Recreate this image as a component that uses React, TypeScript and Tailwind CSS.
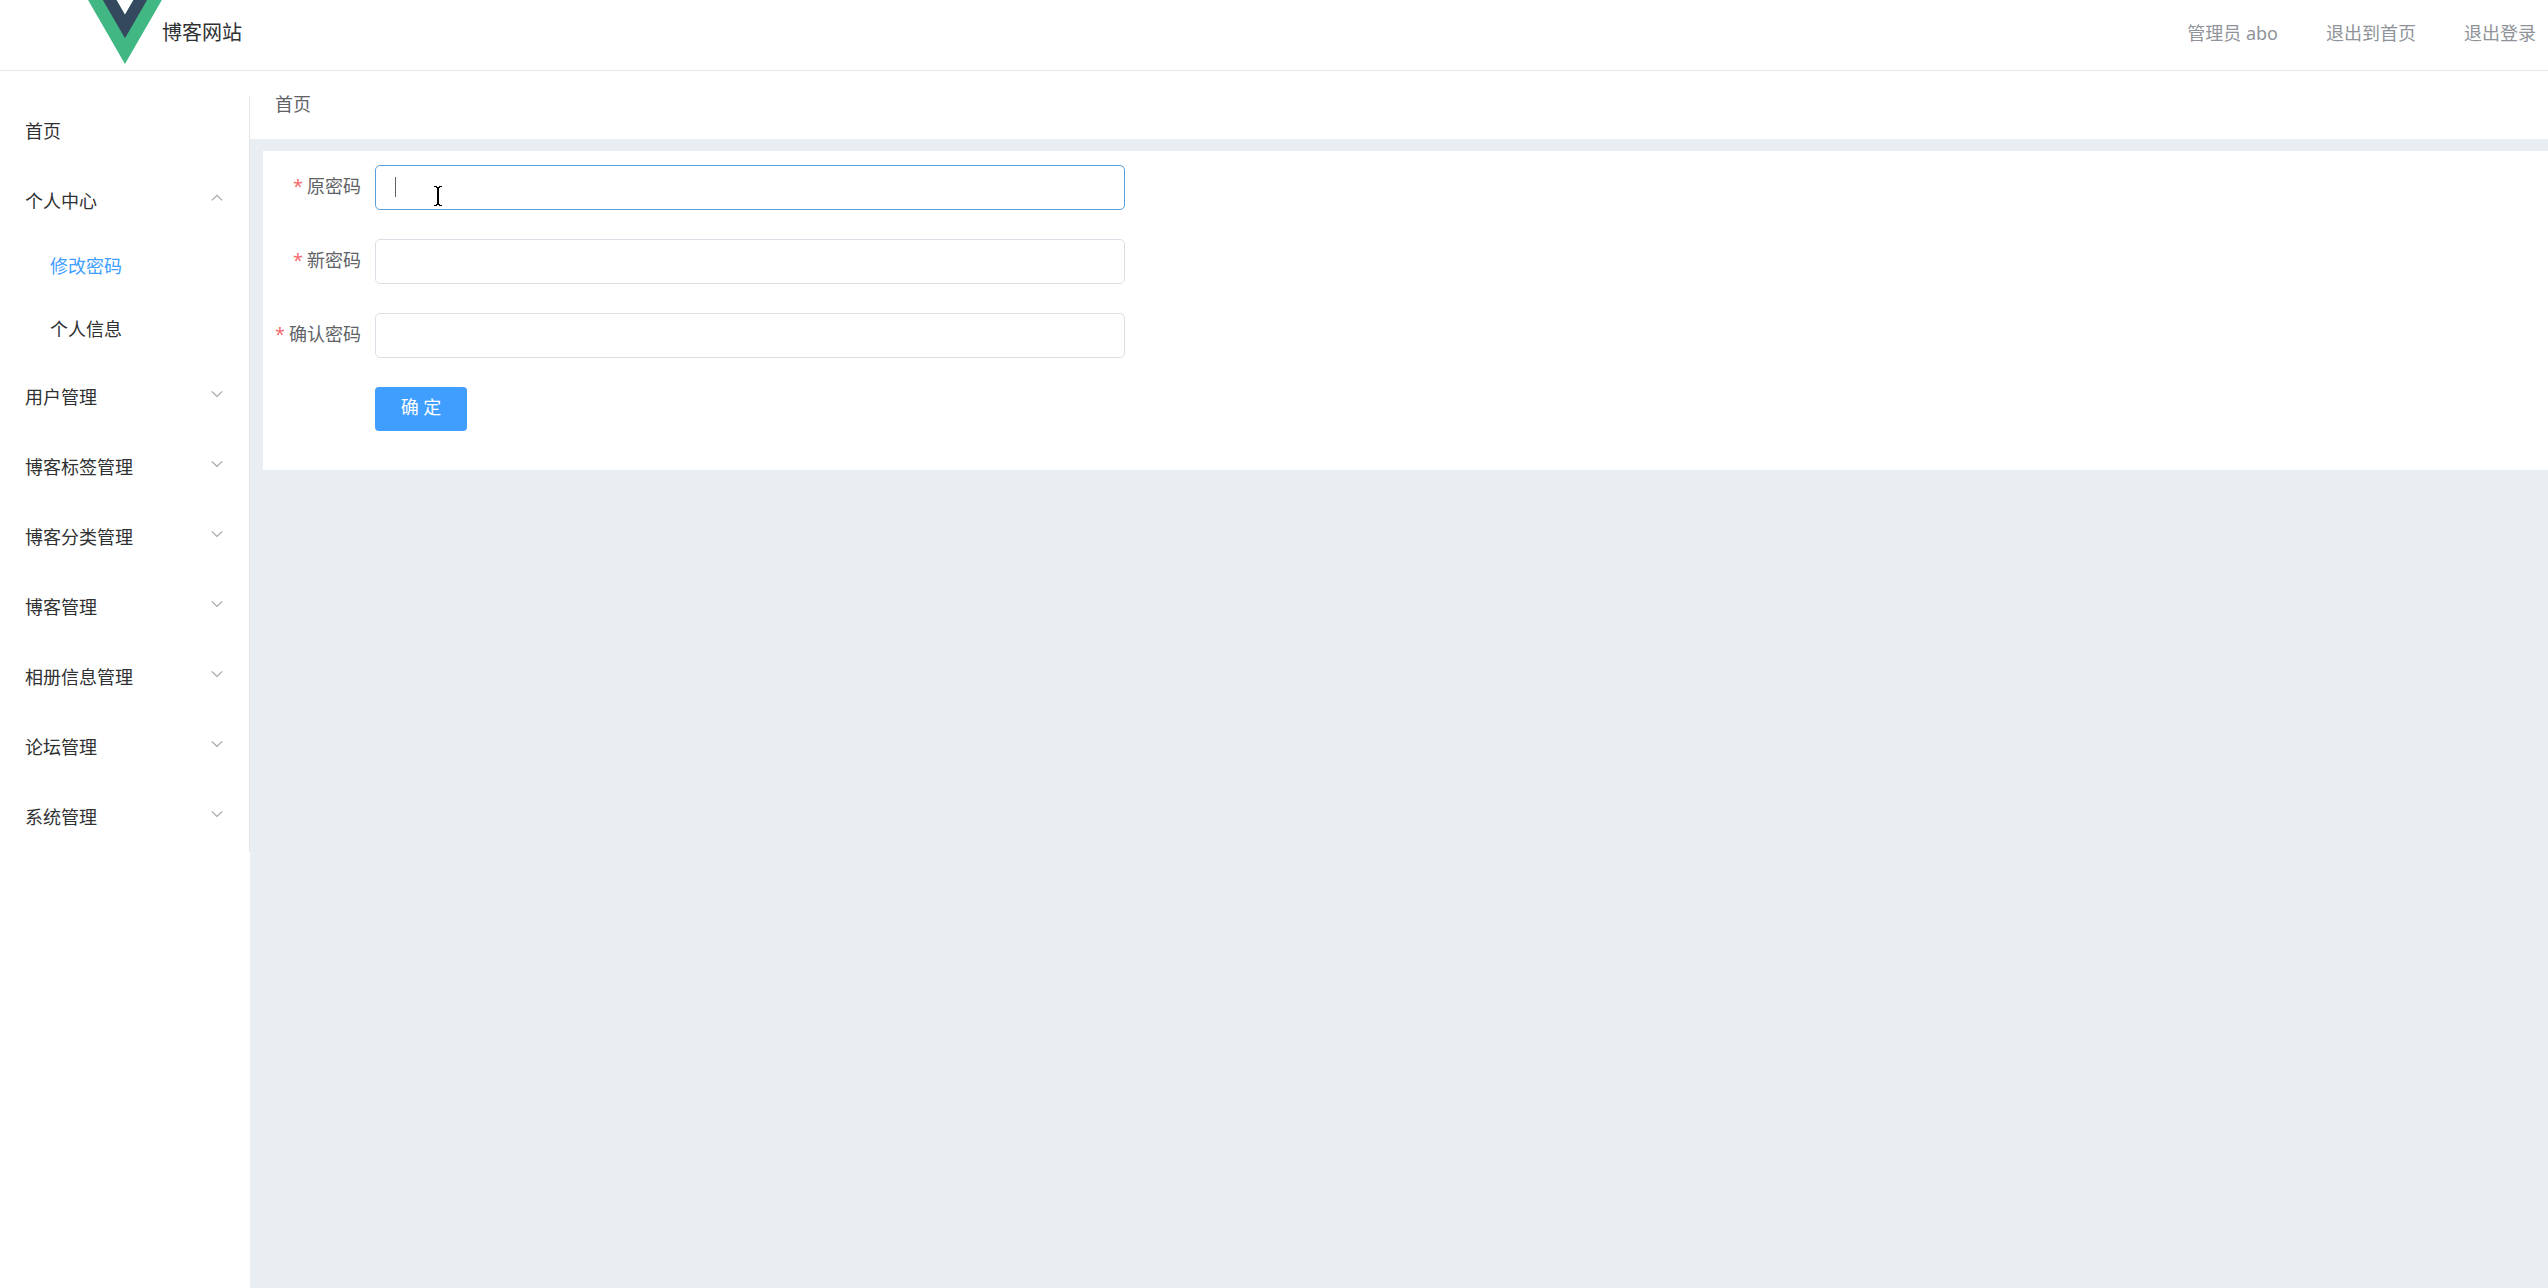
import React, { useState } from "react";

type MenuGroup = { title: string; children?: string[] };

const groups: MenuGroup[] = [
  { title: "个人中心", children: ["修改密码", "个人信息"] },
  { title: "用户管理" },
  { title: "博客标签管理" },
  { title: "博客分类管理" },
  { title: "博客管理" },
  { title: "相册信息管理" },
  { title: "论坛管理" },
  { title: "系统管理" },
];

const fields = [
  { id: "old-password", label: "原密码" },
  { id: "new-password", label: "新密码" },
  { id: "confirm-password", label: "确认密码" },
];

function Logo() {
  return (
    <svg viewBox="0 0 262 227" className="h-16 w-[74px] shrink-0" aria-hidden="true">
      <path d="M161.1 0 130.87 52.35 100.65 0H0l130.87 226.69L261.75 0z" fill="#41b883" />
      <path d="M161.1 0 130.87 52.35 100.65 0H52.35l78.52 136.01L209.4 0z" fill="#34495e" />
    </svg>
  );
}

function Chevron({ open }: { open: boolean }) {
  return (
    <svg
      viewBox="0 0 12 8"
      className="mb-1.5 h-2 w-3 text-[#a3a6ad]"
      fill="none"
      stroke="currentColor"
      strokeWidth="1.2"
      aria-hidden="true"
    >
      <path d={open ? "M.8 6.4 6 1.4l5.2 5" : "M.8 1.4 6 6.4l5.2-5"} />
    </svg>
  );
}

function TextCursor() {
  return (
    <svg
      viewBox="0 0 8 20"
      className="pointer-events-none absolute top-[21px] left-[59px] h-5 w-2"
      aria-hidden="true"
    >
      <path d="M0 0h3v1H0zM5 0h3v1H5zM2 1h4v1H5v16h1v1H2v-1h1V2H2zM0 19h3v1H0zM5 19h3v1H5z" fill="#000" />
    </svg>
  );
}

function Header() {
  return (
    <header className="flex h-[71px] items-start justify-between border-b border-[#e8e8e8] bg-white">
      <a href="#home" className="flex items-start pl-[88px] text-[20px] text-[#303133]">
        <Logo />
        <span className="leading-[66px]">博客网站</span>
      </a>
      <nav className="flex gap-12 pr-3 leading-[66px] text-[#909399]">
        <a href="#profile">管理员 abo</a>
        <a href="#front">退出到首页</a>
        <a href="#logout">退出登录</a>
      </nav>
    </header>
  );
}

function Sidebar() {
  const [open, setOpen] = useState("个人中心");
  return (
    <aside className="w-[250px] shrink-0 bg-white pt-[25px]">
      <ul className="border-r border-[#e6e6e6] text-[#303133]">
        <li>
          <a href="#home" className="flex h-[70px] items-center pl-[25px]">
            首页
          </a>
        </li>
        {groups.map((g) => (
          <li key={g.title}>
            <button
              type="button"
              aria-expanded={open === g.title}
              onClick={() => setOpen(open === g.title ? "" : g.title)}
              className="flex h-[70px] w-full items-center justify-between pr-[26px] pl-[25px]"
            >
              {g.title}
              <Chevron open={open === g.title} />
            </button>
            {g.children && open === g.title && (
              <ul>
                {g.children.map((c, i) => (
                  <li key={c}>
                    <a
                      href={"#" + c}
                      className={"flex h-[63px] items-center pb-0.5 pl-[50px] " + (i === 0 ? "text-[#409eff]" : "")}
                    >
                      {c}
                    </a>
                  </li>
                ))}
              </ul>
            )}
          </li>
        ))}
      </ul>
    </aside>
  );
}

function PasswordForm() {
  return (
    <form className="flex max-w-[862px] flex-col gap-[29px]" onSubmit={(e) => e.preventDefault()}>
      {fields.map((f, i) => (
        <div key={f.id} className="flex">
          <label htmlFor={f.id} className="w-[112px] shrink-0 pr-[14px] text-right leading-[42px] text-[#606266]">
            <span className="mr-1 text-[#f56c6c]">*</span>
            {f.label}
          </label>
          <div className="relative flex-1">
            <input
              id={f.id}
              type="password"
              className={
                "block h-[45px] w-full rounded-[5px] border bg-white px-[19px] text-[#606266] caret-transparent outline-none " +
                (i === 0 ? "border-[#5a9fdc]" : "border-[#dcdfe6]")
              }
            />
            {i === 0 && (
              <>
                <span className="pointer-events-none absolute top-3 left-5 h-5 w-px bg-[#606266]" />
                <TextCursor />
              </>
            )}
          </div>
        </div>
      ))}
      <button
        type="submit"
        className="ml-[112px] h-[44px] w-[92px] rounded-[4px] bg-[#409eff] pb-1 text-white"
      >
        确 定
      </button>
    </form>
  );
}

export default function App() {
  return (
    <div className="flex min-h-screen flex-col bg-white font-['Noto_Sans','Noto_Sans_CJK_SC',sans-serif] text-[18px] font-normal">
      <Header />
      <div className="flex flex-1">
        <Sidebar />
        <main className="min-w-0 flex-1 bg-[#e9eef3]">
          <nav className="h-[68px] bg-white pl-[25px] leading-[66px] text-[#606266]">
            <a href="#home">首页</a>
          </nav>
          <section className="mt-3 ml-[13px] bg-white pt-3.5 pb-[39px]">
            <PasswordForm />
          </section>
        </main>
      </div>
    </div>
  );
}
